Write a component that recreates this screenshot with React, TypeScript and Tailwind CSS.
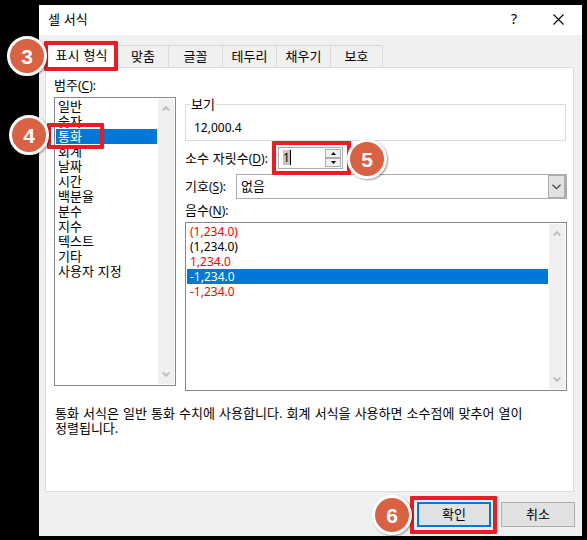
import React from "react";
import { cva } from "class-variance-authority";
import { twMerge } from "tailwind-merge";

const tabs = [
  { label: "맞춤", className: "w-[51px]" },
  { label: "글꼴", className: "w-[54px]" },
  { label: "테두리", className: "w-[54px]" },
  { label: "채우기", className: "w-[54px]" },
  { label: "보호", className: "w-[52px]" },
];

const categories = [
  "일반",
  "숫자",
  "통화",
  "회계",
  "날짜",
  "시간",
  "백분율",
  "분수",
  "지수",
  "텍스트",
  "기타",
  "사용자 지정",
];

const negatives = [
  { label: "(1,234.0)", red: true },
  { label: "(1,234.0)", red: false },
  { label: "1,234.0", red: true },
  { label: "-1,234.0", red: true, selected: true },
  { label: "-1,234.0", red: true },
];

const buttonVariants = cva(
  "flex h-[25px] w-[74px] items-center justify-center bg-[#e1e1e1] pb-[3px]",
  {
    variants: {
      intent: {
        primary: "border-2 border-[#0078d7]",
        default: "border border-[#adadad]",
      },
    },
    defaultVariants: {
      intent: "default",
    },
  }
);

const Button = ({
  intent,
  children,
}: {
  intent?: "primary" | "default";
  children: React.ReactNode;
}) => <button className={buttonVariants({ intent })}>{children}</button>;

const Latin = ({
  className,
  children,
}: {
  className?: string;
  children: React.ReactNode;
}) => (
  <span
    className={twMerge("font-['Noto_Sans',sans-serif] text-[12px] font-normal", className)}
  >
    {children}
  </span>
);

const FieldLabel = ({ text, hotkey }: { text: string; hotkey: string }) => (
  <span className="whitespace-nowrap">
    {text}
    <Latin>
      (<u className="underline-offset-2">{hotkey}</u>):
    </Latin>
  </span>
);

const Chevron = ({ up = false }: { up?: boolean }) => (
  <svg width="8" height="7" viewBox="0 0 8 7" fill="none">
    <path
      d={up ? "M0.7 5.5 4 2.2 7.3 5.5" : "M0.7 1.5 4 4.8 7.3 1.5"}
      stroke="#bfbfbf"
      strokeWidth="2"
    />
  </svg>
);

const ScrollBar = () => (
  <div className="flex w-4 shrink-0 flex-col items-center justify-between bg-[#f0f0f0] py-1.5">
    <Chevron up />
    <Chevron />
  </div>
);

const Badge = ({ className, value }: { className: string; value: number }) => (
  <div
    className={twMerge(
      "absolute flex size-10 items-center justify-center rounded-full border-[3px] border-white bg-[#d96243] font-['Liberation_Sans',sans-serif] text-[21px] leading-none font-bold text-white shadow-[1px_1px_2px_rgba(0,0,0,0.4)]",
      className
    )}
  >
    {value}
  </div>
);

const Highlight = ({ className }: { className: string }) => (
  <div className={twMerge("absolute rounded-[1px] border-4 border-[#ed1c24]", className)} />
);

const App = () => {
  return (
    <main className="relative h-[540px] w-[587px] overflow-hidden bg-black pt-[5px] pl-[39px] font-['Noto_Sans_CJK_KR',sans-serif] text-[13px] leading-[15px] font-normal text-black [word-spacing:1px]">
      <div className="flex h-[531px] w-[543px] flex-col bg-[#f0f0f0]">
        <header className="flex h-[30px] shrink-0 items-center bg-white pl-[9px]">
          <h1 className="flex-1 pb-[3px]">셀 서식</h1>
          <span className="mr-9 pb-[3px] font-['Noto_Sans',sans-serif] text-[14px]">?</span>
          <svg className="mr-[18px] mb-[2px]" width="11" height="11" viewBox="0 0 11 11">
            <path d="M0.5 0.5 10.5 10.5M10.5 0.5 0.5 10.5" stroke="#000" strokeWidth="1.1" />
          </svg>
        </header>

        <nav className="relative mt-2 ml-1.5 flex h-[25px] shrink-0 items-end">
          <div className="-mb-px flex h-[26px] w-[73px] items-center justify-center border border-b-0 border-[#d9d9d9] bg-white pb-[5px]">
            표시 형식
          </div>
          {tabs.map((tab) => (
            <div
              key={tab.label}
              className={twMerge(
                "flex h-[23px] items-center justify-center border-t border-r border-[#d9d9d9] pb-[4px]",
                tab.className
              )}
            >
              {tab.label}
            </div>
          ))}
        </nav>

        <section className="-mt-px ml-1.5 h-[425px] w-[529px] shrink-0 border border-[#dcdcdc] bg-white pt-[9px] pl-2">
          <div className="flex gap-[9px]">
            <div className="w-[122px]">
              <div className="h-[15px]">
                <FieldLabel text="범주" hotkey="C" />
              </div>
              <div className="mt-[5px] flex h-[289px] border border-[#828790] p-px">
                <ul className="mr-px flex-1">
                  {categories.map((item) => (
                    <li
                      key={item}
                      className={twMerge(
                        "h-[15px] pl-0.5 leading-[13px] whitespace-nowrap",
                        item === "통화" && "bg-[#0078d7] text-white"
                      )}
                    >
                      {item}
                    </li>
                  ))}
                </ul>
                <ScrollBar />
              </div>
            </div>

            <div className="w-[382px] pt-[19px]">
              <fieldset className="h-[45px] w-[381px] border border-[#dcdcdc] pl-2">
                <legend className="-ml-[4px] px-px pb-[2px] leading-[15px]">보기</legend>
                <Latin className="block pt-[7px]">12,000.4</Latin>
              </fieldset>

              <div className="mt-[6px] flex h-[22px] items-center">
                <div className="w-[93px] pb-px">
                  <FieldLabel text="소수 자릿수" hotkey="D" />
                </div>
                <div className="flex h-[22px] w-[65px] items-center border border-[#adadad] bg-white pb-px pl-1">
                  <Latin className="h-[15px] w-2 border-r border-black bg-[#c6c6c6]">1</Latin>
                  <div className="mt-px mr-px ml-auto flex w-4 flex-col">
                    <div className="flex h-[9px] items-center justify-center border border-[#adadad] bg-[#f0f0f0]">
                      <svg width="5" height="3" viewBox="0 0 5 3">
                        <path d="M0 3 2.5 0 5 3Z" />
                      </svg>
                    </div>
                    <div className="flex h-[9px] items-center justify-center border border-[#adadad] bg-[#f0f0f0]">
                      <svg width="5" height="3" viewBox="0 0 5 3">
                        <path d="M0 0 2.5 3 5 0Z" />
                      </svg>
                    </div>
                  </div>
                </div>
              </div>

              <div className="mt-[5px] flex h-[25px] items-center">
                <div className="w-[51px] pb-[2px]">
                  <FieldLabel text="기호" hotkey="S" />
                </div>
                <div className="flex h-[25px] flex-1 items-center border border-[#adadad] bg-white pl-1">
                  <span className="flex-1 pb-[3px]">없음</span>
                  <div className="flex h-full w-[18px] items-center justify-center border border-r-2 border-[#adadad] bg-[#e1e1e1]">
                    <svg width="9" height="6" viewBox="0 0 9 6" fill="none">
                      <path d="M0.5 0.8 4.5 4.6 8.5 0.8" stroke="#444" strokeWidth="1.3" />
                    </svg>
                  </div>
                </div>
              </div>

              <div className="mt-[3px] h-[15px]">
                <FieldLabel text="음수" hotkey="N" />
              </div>
              <div className="mt-[5px] flex h-[169px] border border-[#828790] p-px">
                <ul className="mr-px flex-1">
                  {negatives.map((item, i) => (
                    <li
                      key={i}
                      className={twMerge(
                        "flex h-[15px] items-center pl-[3px]",
                        item.red && "text-[#ff0000]",
                        item.selected && "bg-[#0078d7] text-white"
                      )}
                    >
                      <Latin>{item.label}</Latin>
                    </li>
                  ))}
                </ul>
                <ScrollBar />
              </div>
            </div>
          </div>

          <p className="mt-[14px] pl-px whitespace-nowrap [word-spacing:1.2px]">
            통화 서식은 일반 통화 수치에 사용합니다. 회계 서식을 사용하면 소수점에 맞추어 열이
            <br />
            정렬됩니다.
          </p>
        </section>

        <footer className="mt-[10px] flex justify-end gap-[10px] pr-[7px]">
          <Button intent="primary">확인</Button>
          <Button>취소</Button>
        </footer>
      </div>

      <Highlight className="top-[41px] left-[44px] h-[30px] w-[74px]" />
      <Highlight className="top-[123px] left-[47px] h-[26px] w-[57px]" />
      <Highlight className="top-[141px] left-[272px] h-[34px] w-[79px]" />
      <Highlight className="top-[496px] left-[410px] h-[38px] w-[87px]" />
      <Badge className="top-[36px] left-[7px]" value={3} />
      <Badge className="top-[115px] left-[9px]" value={4} />
      <Badge className="top-[139px] left-[347px]" value={5} />
      <Badge className="top-[495px] left-[372px]" value={6} />
    </main>
  );
};

export default App;
